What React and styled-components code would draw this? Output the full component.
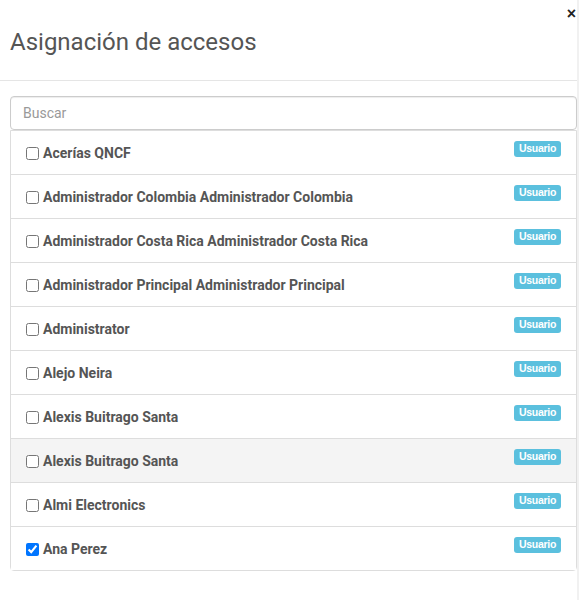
import React from "react";
import styled, { createGlobalStyle } from "styled-components";

const Global = createGlobalStyle`
  html, body { margin: 0; padding: 0; background: #f1f1f1; }
  body { font-family: Roboto, "Liberation Sans", sans-serif; }
  * { box-sizing: border-box; }
`;

const Modal = styled.div`
  width: 577px;
  min-height: 600px;
  background: #fff;
  position: relative;
  color: #555;
`;

const Close = styled.button`
  position: absolute;
  top: 6px;
  right: 1px;
  border: 0;
  background: none;
  padding: 0;
  font-family: "Liberation Sans", Arial, sans-serif;
  font-weight: bold;
  font-size: 16px;
  line-height: 1;
  color: #222;
  cursor: pointer;
`;

const Header = styled.div`
  height: 81px;
  border-bottom: 1px solid #e5e5e5;
  padding: 0 10px;
  display: flex;
  align-items: center;
`;

const Title = styled.h4`
  margin: 5px 0 0 0;
  font-size: 24px;
  font-weight: 400;
  color: #555;
  line-height: 1.1;
`;

const Body = styled.div`
  padding: 15px 0 0 10px;
`;

const Search = styled.input`
  display: block;
  width: 100%;
  height: 34px;
  padding: 6px 12px;
  font-family: Roboto, "Liberation Sans", sans-serif;
  font-size: 14px;
  color: #555;
  border: 1px solid #ccc;
  border-radius: 4px;
  box-shadow: inset 0 1px 1px rgba(0, 0, 0, 0.075);
  outline: none;
  &::placeholder { color: #999; }
`;

const List = styled.div`
  border: 1px solid #ddd;
  border-radius: 0 0 4px 4px;
`;

const Item = styled.div`
  height: 44px;
  padding: 10px 15px 0 15px;
  display: flex;
  justify-content: space-between;
  align-items: flex-start;
  background: ${(p) => (p.$hover ? "#f4f4f4" : "#fff")};
  border-top: 1px solid #ddd;
  &:first-child { border-top: 0; height: 43px; }
`;

const Label = styled.label`
  display: flex;
  align-items: center;
  margin-top: 2px;
  line-height: 20px;
  font-size: 14px;
  font-weight: 700;
  color: #555;
`;

const Check = styled.input`
  width: 13px;
  height: 13px;
  margin: 0 4px 0 0;
  accent-color: #0075ff;
`;

const Badge = styled.span`
  display: inline-block;
  background: #5bc0de;
  color: #fff;
  font-family: "Liberation Sans", Arial, sans-serif;
  font-weight: 700;
  font-size: 10.5px;
  line-height: 1;
  padding: 2px 5px 3px;
  border-radius: 3px;
  margin-top: 0;
  letter-spacing: -0.3px;
`;

const users = [
  "Acerías QNCF",
  "Administrador Colombia Administrador Colombia",
  "Administrador Costa Rica Administrador Costa Rica",
  "Administrador Principal Administrador Principal",
  "Administrator",
  "Alejo Neira",
  "Alexis Buitrago Santa",
  "Alexis Buitrago Santa",
  "Almi Electronics",
  "Ana Perez",
];

export default function App() {
  return (
    <>
      <Global />
      <Modal>
        <Close aria-label="Cerrar">×</Close>
        <Header>
          <Title>Asignación de accesos</Title>
        </Header>
        <Body>
          <Search placeholder="Buscar" />
          <List>
            {users.map((u, i) => (
              <Item key={i} $hover={i === 7}>
                <Label>
                  <Check type="checkbox" defaultChecked={i === 9} />
                  {u}
                </Label>
                <Badge>Usuario</Badge>
              </Item>
            ))}
          </List>
        </Body>
      </Modal>
    </>
  );
}
